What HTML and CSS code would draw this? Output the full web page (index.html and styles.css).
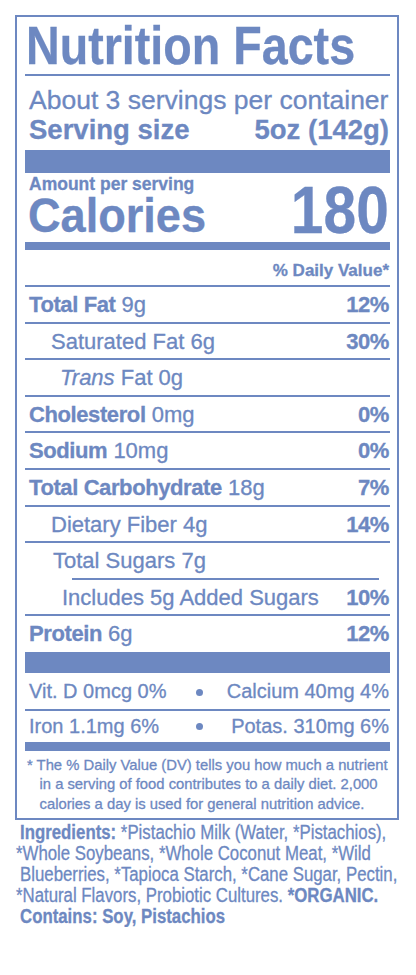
FILE: index.html
```html
<!DOCTYPE html>
<html lang="en">
<head>
<meta charset="utf-8">
<title>Nutrition Facts</title>
<link rel="stylesheet" href="styles.css">
</head>
<body>
<section class="label">
  <h1 class="title"><span>Nutrition Facts</span></h1>
  <div class="servings">
    <p class="per-container">About 3 servings per container</p>
    <p class="serving-size"><span>Serving size</span><span>5oz (142g)</span></p>
  </div>
  <div class="bar bar-thick"></div>
  <div class="calories">
    <div class="cal-left">
      <p class="amount">Amount per serving</p>
      <p class="cal-label"><span>Calories</span></p>
    </div>
    <p class="cal-value"><span>180</span></p>
  </div>
  <div class="bar bar-mid"></div>
  <p class="dv-head">% Daily Value*</p>
  <div class="rows">
    <div class="row line"><span><b>Total Fat</b> 9g</span><b>12%</b></div>
    <div class="row line sub"><span>Saturated Fat 6g</span><b>30%</b></div>
    <div class="row line trans"><span><i>Trans</i> Fat 0g</span></div>
    <div class="row line"><span><b>Cholesterol</b> 0mg</span><b>0%</b></div>
    <div class="row line"><span><b>Sodium</b> 10mg</span><b>0%</b></div>
    <div class="row line"><span><b>Total Carbohydrate</b> 18g</span><b>7%</b></div>
    <div class="row line sub"><span>Dietary Fiber 4g</span><b>14%</b></div>
    <div class="row sugars"><span>Total Sugars 7g</span></div>
    <div class="rule-inset"></div>
    <div class="row line added"><span>Includes 5g Added Sugars</span><b>10%</b></div>
    <div class="row protein"><span><b>Protein</b> 6g</span><b>12%</b></div>
  </div>
  <div class="bar bar-vit"></div>
  <div class="vit vit-1"><span>Vit. D 0mcg 0%</span><span class="dot"></span><span class="vit-r">Calcium 40mg 4%</span></div>
  <div class="vit vit-2"><span>Iron 1.1mg 6%</span><span class="dot"></span><span class="vit-r">Potas. 310mg 6%</span></div>
  <div class="bar bar-low"></div>
  <p class="footnote">* The % Daily Value (DV) tells you how much a nutrient<br>in a serving of food contributes to a daily diet. 2,000<br>calories a day is used for general nutrition advice.</p>
</section>
<p class="ingredients">
  <span class="ln ind"><b>Ingredients:</b> *Pistachio Milk (Water, *Pistachios),</span>
  <span class="ln">*Whole Soybeans, *Whole Coconut Meat, *Wild</span>
  <span class="ln ind">Blueberries, *Tapioca Starch, *Cane Sugar, Pectin,</span>
  <span class="ln">*Natural Flavors, Probiotic Cultures. <b>*ORGANIC.</b></span>
  <span class="ln ind"><b>Contains: Soy, Pistachios</b></span>
</p>
</body>
</html>
```
FILE: styles.css
```css
* { box-sizing: border-box; }
html, body { margin: 0; padding: 0; background: #ffffff; }
body {
  font-family: "Liberation Sans", Arial, sans-serif;
  color: #6d88c1;
  -webkit-text-stroke: 0.3px #6d88c1;
}
p, h1 { margin: 0; }

.label {
  width: 384px;
  margin: 15px 0 0 15px;
  border: 2px solid #6d88c1;
  padding: 0 7px 0 8px;
}

.title {
  font-size: 53px;
  line-height: 57px;
  font-weight: 700;
  border-bottom: 2px solid;
  white-space: nowrap;
}
.title span {
  display: inline-block;
  transform: scaleX(0.88);
  transform-origin: 0 50%;
  margin-left: 1px;
}

.servings { padding: 9px 1px 5px 4px; }
.per-container { font-size: 26.5px; line-height: 30px; white-space: nowrap; }
.serving-size {
  display: flex;
  justify-content: space-between;
  font-size: 27.5px;
  line-height: 30px;
  font-weight: 700;
  white-space: nowrap;
}

.bar { background: #6d88c1; }
.bar-thick { height: 23px; }
.bar-mid { height: 8px; }
.bar-vit { height: 21px; }
.bar-low { height: 9px; }

.calories {
  display: flex;
  justify-content: space-between;
  align-items: flex-end;
  padding: 1px 1px 0 4px;
  margin-bottom: 4px;
  white-space: nowrap;
}
.amount { font-size: 17.5px; line-height: 20px; font-weight: 700; }
.cal-label { font-size: 48px; line-height: 44px; font-weight: 700; margin-left: -1px; }
.cal-label span { display: inline-block; transform: scaleX(0.94); transform-origin: 0 50%; }
.cal-value { font-size: 67px; line-height: 56.4px; font-weight: 700; }
.cal-value span { display: inline-block; transform: scaleX(0.876); transform-origin: 100% 50%; }

.dv-head {
  text-align: right;
  font-size: 17px;
  line-height: 20px;
  font-weight: 700;
  padding: 11px 1px 4px 0;
  border-bottom: 2px solid;
}

.row {
  display: flex;
  justify-content: space-between;
  font-size: 22px;
  line-height: 33.6px;
  padding: 1px 1px 0 4px;
  white-space: nowrap;
}
.row b { font-weight: 700; letter-spacing: -0.4px; }
.row.line { border-bottom: 2px solid; }
.row.sub { padding-left: 26px; }
.row.trans { padding-left: 35px; }
.row.sugars { padding-left: 28px; }
.row.added { padding-left: 37px; }
.row.protein { padding-bottom: 1px; }
.rule-inset { height: 2px; margin: 0 11px 0 47px; background: #6d88c1; }

.vit {
  display: grid;
  grid-template-columns: 160px 20px 1fr;
  align-items: center;
  font-size: 20px;
  padding: 0 1px 0 4px;
  white-space: nowrap;
}
.vit-1 { line-height: 36px; border-bottom: 2px solid; }
.vit-2 { line-height: 31px; }
.dot {
  justify-self: center;
  width: 7px;
  height: 7px;
  border-radius: 50%;
  background: #6d88c1;
}
.vit-1 .dot { margin-top: 4px; }
.vit-r { text-align: right; }

.footnote {
  font-size: 14.8px;
  line-height: 19.3px;
  padding: 5px 0 4px 14.5px;
  text-indent: -12.5px;
  white-space: nowrap;
}

.ingredients {
  margin: 2.6px 0 0 15.5px;
  font-size: 20px;
  line-height: 21px;
  transform: scaleX(0.84);
  transform-origin: 0 0;
  white-space: nowrap;
}
.ingredients .ln { display: block; }
.ingredients .ind { padding-left: 4.8px; }
.ingredients b { font-weight: 700; }
```
